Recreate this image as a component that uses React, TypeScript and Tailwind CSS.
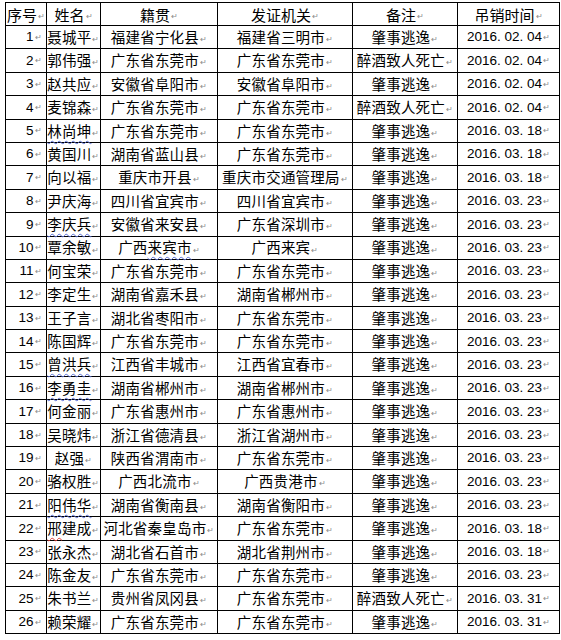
import type { ReactNode } from "react";

type Row = [number, ReactNode, ReactNode, string, string, string];

const blue = (t: string) => (
  <span className="underline decoration-wavy decoration-[#5a6fd6] decoration-1 underline-offset-[3px]">{t}</span>
);
const red = (t: string) => (
  <span className="underline decoration-wavy decoration-[#e0403a] decoration-1 underline-offset-[3px]">{t}</span>
);

const rows: Row[] = [
  [1, "聂城平", "福建省宁化县", "福建省三明市", "肇事逃逸", "2016. 02. 04"],
  [2, "郭伟强", "广东省东莞市", "广东省东莞市", "醉酒致人死亡", "2016. 02. 04"],
  [3, "赵共应", "安徽省阜阳市", "安徽省阜阳市", "肇事逃逸", "2016. 02. 04"],
  [4, "麦锦森", "广东省东莞市", "广东省东莞市", "醉酒致人死亡", "2016. 02. 04"],
  [5, blue("林尚坤"), "广东省东莞市", "广东省东莞市", "肇事逃逸", "2016. 03. 18"],
  [6, "黄国川", "湖南省蓝山县", "广东省东莞市", "肇事逃逸", "2016. 03. 18"],
  [7, "向以福", "重庆市开县", "重庆市交通管理局", "肇事逃逸", "2016. 03. 18"],
  [8, "尹庆海", "四川省宜宾市", "四川省宜宾市", "肇事逃逸", "2016. 03. 23"],
  [9, blue("李庆兵"), "安徽省来安县", "广东省深圳市", "肇事逃逸", "2016. 03. 23"],
  [10, "覃余敏", <>广西{blue("来宾市")}</>, "广西来宾", "肇事逃逸", "2016. 03. 23"],
  [11, "何宝荣", "广东省东莞市", "广东省东莞市", "肇事逃逸", "2016. 03. 23"],
  [12, "李定生", "湖南省嘉禾县", "湖南省郴州市", "肇事逃逸", "2016. 03. 23"],
  [13, "王子言", "湖北省枣阳市", "广东省东莞市", "肇事逃逸", "2016. 03. 23"],
  [14, "陈国辉", "广东省东莞市", "广东省东莞市", "肇事逃逸", "2016. 03. 23"],
  [15, blue("曾洪兵"), "江西省丰城市", "江西省宜春市", "肇事逃逸", "2016. 03. 23"],
  [16, blue("李勇圭"), "湖南省郴州市", "湖南省郴州市", "肇事逃逸", "2016. 03. 23"],
  [17, "何金丽", "广东省惠州市", "广东省惠州市", "肇事逃逸", "2016. 03. 23"],
  [18, "吴晓炜", "浙江省德清县", "浙江省湖州市", "肇事逃逸", "2016. 03. 23"],
  [19, "赵强", "陕西省渭南市", "广东省东莞市", "肇事逃逸", "2016. 03. 23"],
  [20, "骆权胜", "广西北流市", "广西贵港市", "肇事逃逸", "2016. 03. 23"],
  [21, blue("阳伟华"), "湖南省衡南县", "湖南省衡阳市", "肇事逃逸", "2016. 03. 23"],
  [22, <>{red("邢")}建成</>, "河北省秦皇岛市", "广东省东莞市", "肇事逃逸", "2016. 03. 18"],
  [23, "张永杰", "湖北省石首市", "湖北省荆州市", "肇事逃逸", "2016. 03. 18"],
  [24, "陈金友", "广东省东莞市", "广东省东莞市", "肇事逃逸", "2016. 03. 23"],
  [25, "朱书兰", "贵州省凤冈县", "广东省东莞市", "醉酒致人死亡", "2016. 03. 31"],
  [26, "赖荣耀", "广东省东莞市", "广东省东莞市", "肇事逃逸", "2016. 03. 31"],
];

// word's paragraph mark after each cell
const Mark = () => <span className="ml-px align-middle text-[8px] leading-none text-[#8a8a8a]">↵</span>;

const cell = "border border-black p-0 whitespace-nowrap";
const num = "font-['Liberation_Sans',sans-serif] text-[13.5px]";

export default function App() {
  return (
    <div className="min-h-[640px] bg-white pt-[2px] pl-[5px] font-['Noto_Sans_CJK_SC',sans-serif] text-black">
      <table className="w-[554px] table-fixed border-collapse">
        <colgroup>
          <col className="w-[41px]" />
          <col className="w-[54px]" />
          <col className="w-[117px]" />
          <col className="w-[135px]" />
          <col className="w-[105px]" />
          <col className="w-[102px]" />
        </colgroup>
        <thead>
          <tr className="h-[23px] text-[15px] leading-none">
            {["序号", "姓名", "籍贯", "发证机关", "备注", "吊销时间"].map((h) => (
              <th key={h} className={`${cell} text-center font-normal`}>
                {h}
                <Mark />
              </th>
            ))}
          </tr>
        </thead>
        <tbody>
          {rows.map(([n, name, origin, office, note, date]) => (
            <tr key={n} className="h-[23.4px] text-[14.5px] leading-none tracking-[0.2px]">
              <td className={`${cell} pr-[4px] text-right ${num}`}>
                {n}
                <Mark />
              </td>
              <td className={`${cell} text-center`}>
                {name}
                <Mark />
              </td>
              <td className={`${cell} text-center`}>
                {origin}
                <Mark />
              </td>
              <td className={`${cell} text-center`}>
                {office}
                <Mark />
              </td>
              <td className={`${cell} text-center`}>
                {note}
                <Mark />
              </td>
              <td className={`${cell} text-center tracking-normal ${num}`}>
                <span className="whitespace-pre">{date}</span>
                <Mark />
              </td>
            </tr>
          ))}
        </tbody>
      </table>
    </div>
  );
}
